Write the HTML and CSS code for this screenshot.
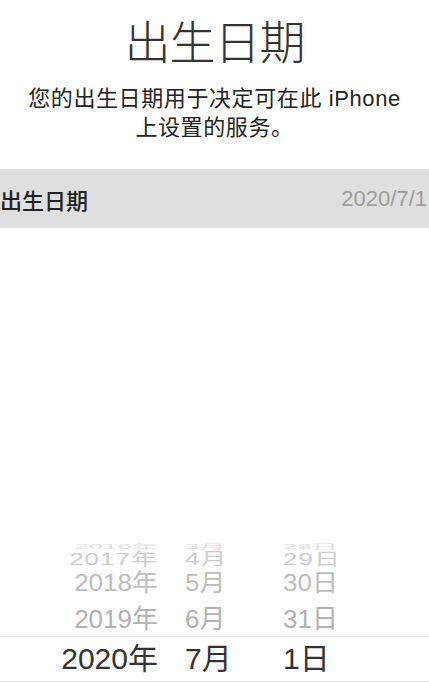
FILE: index.html
```html
<!DOCTYPE html>
<html lang="zh-CN">
<head>
  <meta charset="UTF-8">
  <meta name="viewport" content="width=device-width, initial-scale=1.0">
  <title>出生日期</title>
  <link rel="stylesheet" href="styles.css">
</head>
<body>
  <div class="page">
    <div class="header">
      <h1>出生日期</h1>
      <p class="desc">您的出生日期用于决定可在此 iPhone<br>上设置的服务。</p>
    </div>

    <div class="field">
      <span class="label">出生日期</span>
      <span class="value">2020/7/1</span>
    </div>

    <div class="picker">
      <div class="prow far">
        <span class="y">2016年</span><span class="m">3月</span><span class="d">28日</span>
      </div>
      <div class="prow near">
        <span class="y">2017年</span><span class="m">4月</span><span class="d">29日</span>
      </div>
      <div class="prow side2">
        <span class="y">2018年</span><span class="m">5月</span><span class="d">30日</span>
      </div>
      <div class="prow side1">
        <span class="y">2019年</span><span class="m">6月</span><span class="d">31日</span>
      </div>
      <div class="prow current">
        <span class="y">2020年</span><span class="m">7月</span><span class="d">1日</span>
      </div>
    </div>
  </div>
</body>
</html>
```

FILE: styles.css
```css
html,body{margin:0; padding:0; background:#fff;}
body{font-family:"Liberation Sans","Noto Sans CJK SC",sans-serif; color:#222;}
.page{height:682px; display:flex; flex-direction:column; overflow:hidden;}

.header{padding-top:17px; text-align:center;}
.header h1{margin:0; font-size:46px; line-height:52px; font-weight:300; color:#333; letter-spacing:-1px;}
.header .desc{margin:15px 0 0; font-size:22px; line-height:29px; color:#222; letter-spacing:.6px;}

.field{margin-top:27px; height:59px; display:flex; align-items:center; justify-content:space-between; background:#dfdfdf;}
.field .label{font-size:22px; font-weight:500; color:#222;}
.field .value{font-size:22px; color:#9d9d9d; margin-right:2px;}

.picker{margin-top:auto;}
.prow{display:grid; grid-template-columns:158px 125px 1fr; align-items:center; white-space:nowrap; line-height:1;}
.prow .y{text-align:right;}
.prow .m{padding-left:27px;}

.prow.far{height:8px; font-size:26px; color:#e0e0e0; transform:scaleY(.25);}
.prow.near{height:17px; font-size:26px; color:#cdcdcd; letter-spacing:1px; transform:scaleY(.66);}
.prow.side2{height:36px; font-size:26px; color:#bdbdbd; transform:scaleY(.9);}
.prow.side1{height:35px; font-size:26px; color:#b2b2b2;}
.prow.current{height:44px; font-size:30px; color:#333; border-top:1px solid #e6e6e6; border-bottom:1px solid #e6e6e6;}
.prow.current .y{margin-left:-4px;}
```
